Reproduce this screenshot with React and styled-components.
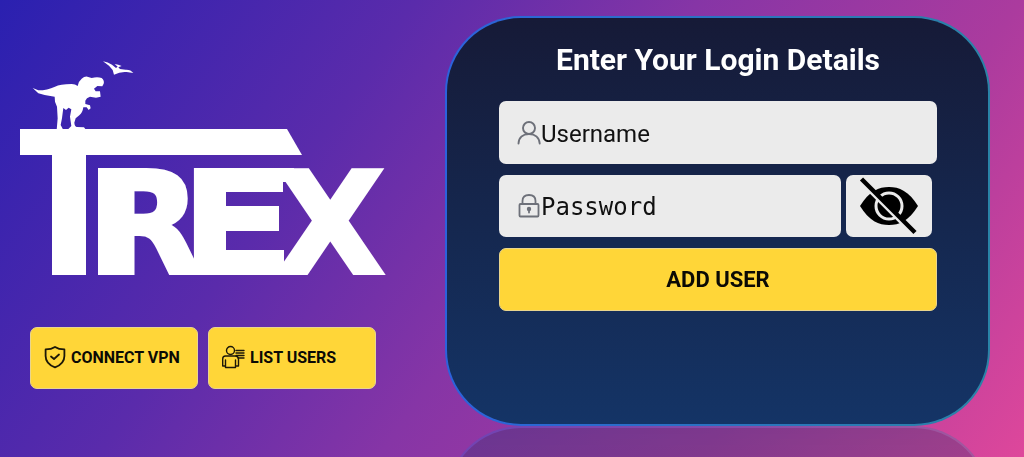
import React from "react";
import styled, { createGlobalStyle } from "styled-components";

const GlobalStyle = createGlobalStyle`
  *, *::before, *::after { box-sizing: border-box; }
  body {
    margin: 0;
    font-family: Roboto, "Liberation Sans", sans-serif;
  }
`;

const Page = styled.main`
  display: grid;
  grid-template-columns: minmax(0, 366fr) minmax(0, 545fr);
  column-gap: 59px;
  align-items: start;
  height: 100vh;
  overflow: hidden;
  padding: 16px 34px 0 20px;
  background: linear-gradient(125deg, #2a20b0 0%, #5a2bab 31%, #8635a6 52%, #ab3b9e 76%, #de479b 100%);
`;

const Brand = styled.section`
  padding-top: 44px;
`;

const Logo = styled.svg`
  display: block;
  width: 100%;
  height: auto;
  fill: #fff;
  font-family: "DejaVu Sans", sans-serif;
  font-weight: 700;
  overflow: visible;
`;

const Actions = styled.nav`
  display: flex;
  gap: 10px;
  padding: 51px 10px 0;
`;

const Button = styled.button`
  display: flex;
  align-items: center;
  height: ${(p) => (p.$large ? 63 : 62)}px;
  justify-content: ${(p) => (p.$large ? "center" : "flex-start")};
  flex: 1 1 0;
  gap: 5px;
  padding: ${(p) => (p.$large ? "0" : "0 0 2px 13px")};
  border: 1px solid #e9d58e;
  border-radius: 7px;
  background: #ffd638;
  color: #0b0a05;
  font: 700 ${(p) => (p.$large ? 22 : 16)}px Roboto, "Liberation Sans", sans-serif;
  white-space: nowrap;
  cursor: pointer;
`;

const Card = styled.form`
  min-height: 410px;
  padding: 24px 51px 0 52px;
  border: 2px solid transparent;
  border-radius: 76px;
  background:
    linear-gradient(#161a37, #143466) padding-box,
    linear-gradient(90deg, #2c62dc, #2a83a6) border-box;
  -webkit-box-reflect: below 0 linear-gradient(transparent, rgba(0, 0, 0, 0.3));
`;

const Title = styled.h1`
  margin: 0 0 23px;
  color: #fff;
  font-size: 30px;
  line-height: 36px;
  text-align: center;
`;

const Fields = styled.div`
  display: flex;
  flex-direction: column;
  gap: 11px;
`;

const Row = styled.div`
  display: flex;
  gap: 5px;
  padding-right: ${(p) => p.$inset || 0}px;
`;

const Field = styled.label`
  display: flex;
  align-items: center;
  flex: 1;
  min-width: 0;
  height: ${(p) => p.$height}px;
  padding-left: 18px;
  border-radius: 7px;
  background: #ebebeb;
`;

const Input = styled.input`
  flex: 1;
  min-width: 0;
  height: 100%;
  padding: 2px 0 0;
  border: 0;
  outline: 0;
  background: transparent;
  color: #111;
  font-family: ${(p) => (p.$mono ? '"DejaVu Sans Mono", monospace' : 'Roboto, "Liberation Sans", sans-serif')};
  font-size: 24px;
  &::placeholder { color: #111; opacity: 1; }
`;

const Reveal = styled.button`
  display: grid;
  place-items: center;
  width: 86px;
  height: 62px;
  padding: 0;
  border: 0;
  border-radius: 7px;
  background: #ebebeb;
  cursor: pointer;
`;

const LineIcon = styled.svg`
  flex: none;
  fill: none;
  stroke: currentColor;
  color: ${(p) => p.$color || "#1c1808"};
  stroke-linecap: round;
  stroke-linejoin: round;
`;

function TrexLogo() {
  return (
    <Logo viewBox="20 60 366 216" role="img" aria-label="TREX">
      <g transform="translate(10 50) scale(.3333)">
        <path d="M68 114L85 121Q112 121 135 110Q150 102 185 102Q196 102 203 108Q205 94 215 86Q223 79 232 80L245 84Q262 79 275 84Q284 92 281 101L277 109L262 108L252 116L257 124L270 124L272 140L258 143L240 140Q229 143 226 152L226 162L240 166L242 175L236 180L230 172L220 172Q218 188 208 196L197 205L193 218Q194 229 200 231L222 232L228 240L172 240L184 228L180 200L184 178L176 173L168 180L160 174L156 205L152 225L160 240L140 240L143 205L141 170L135 155L134 140Q107 138 85 130Z" />
        <path d="M279 34Q294 36 306 44L318 54L323 50L314 42L325 44L335 48L325 52L330 57L347 59Q362 58 370 69L350 66Q331 64 312 74L308 60L297 47Z" />
      </g>
      <path d="M20 129H287L302 155H20Z" />
      <rect x="52" y="150" width="34" height="125" />
      <text x="22 93 183 276" y="235 273 273 273" fontSize="141" stroke="#fff" strokeWidth="4">TREX</text>
      {/* Blocks that widen the stems and join the letters */}
      <rect x="98" y="168" width="20" height="107" />
      <rect x="200" y="168" width="26" height="107" />
      <rect x="210" y="168" width="84" height="14" />
      <rect x="210" y="168" width="73" height="24" />
      <rect x="210" y="206" width="69" height="25" />
      <rect x="210" y="250" width="74" height="25" />
    </Logo>
  );
}

const ShieldIcon = () => (
  <LineIcon width="22" height="24" viewBox="0 0 22 24" strokeWidth="1.8" aria-hidden="true">
    <path d="M11 2C8 4 5 4.4 1.6 4.4V11C1.6 17 6 20.5 11 22.4C16 20.5 20.4 17 20.4 11V4.4C17 4.4 14 4 11 2Z" />
    <path d="M7 11.5L10 14L15 9.5" />
  </LineIcon>
);

const PersonListIcon = () => (
  <LineIcon width="23" height="24" viewBox="1 0 23 24" strokeWidth="1.4" aria-hidden="true">
    <circle cx="9.5" cy="5.5" r="4" />
    <path d="M4.5 21H1.7V14Q1.7 11 4.5 11H14Q17.5 11 17.5 14.5V21H14.5M4.5 15V22.5H14.5V15" />
    <path d="M15 5.5H23M15 8H23M15 10.5H23M17 13H23" />
  </LineIcon>
);

const UserIcon = () => (
  <LineIcon width="24" height="24" viewBox="0 0 24 24" strokeWidth="1.9" $color="#6d7079" aria-hidden="true">
    <circle cx="12" cy="7" r="6" />
    <path d="M1.5 22.5C1.8 16.5 6 13 12 13S22.2 16.5 22.7 22.5" />
  </LineIcon>
);

const LockIcon = () => (
  <LineIcon width="24" height="24" viewBox="0 0 24 24" strokeWidth="1.8" $color="#6d7079" aria-hidden="true">
    <rect x="2.5" y="10" width="19" height="12.5" rx="1" />
    <path d="M5.5 10V7Q5.5 1 12 1T18.5 7V10" />
    <circle cx="12" cy="15" r="1.3" fill="currentColor" />
    <path d="M12 15V18.5" />
  </LineIcon>
);

const EyeOffIcon = () => (
  <svg width="60" height="58" viewBox="0 0 60 58" aria-hidden="true">
    <path d="M1 29C10 14 20 10 30 10S50 14 59 29C50 44 40 48 30 48S10 44 1 29Z" />
    <circle cx="30" cy="29" r="13" fill="none" stroke="#ebebeb" strokeWidth="3" />
    <path d="M0 3L54 57" fill="none" stroke="#ebebeb" strokeWidth="4" />
    <path d="M2.5 2L56 55.5" fill="none" stroke="#000" strokeWidth="4.5" />
  </svg>
);

export default function App() {
  return (
    <>
      <GlobalStyle />
      <Page>
        <Brand>
          <TrexLogo />
          <Actions>
            <Button type="button"><ShieldIcon />CONNECT VPN</Button>
            <Button type="button"><PersonListIcon />LIST USERS</Button>
          </Actions>
        </Brand>
        <Card onSubmit={(e) => e.preventDefault()}>
          <Title>Enter Your Login Details</Title>
          <Fields>
            <Row>
              <Field $height={63}>
                <UserIcon />
                <Input type="text" placeholder="Username" aria-label="Username" />
              </Field>
            </Row>
            <Row $inset={5}>
              <Field $height={62}>
                <LockIcon />
                <Input $mono type="password" placeholder="Password" aria-label="Password" />
              </Field>
              <Reveal type="button" aria-label="Show password"><EyeOffIcon /></Reveal>
            </Row>
            <Row><Button $large type="submit">ADD USER</Button></Row>
          </Fields>
        </Card>
      </Page>
    </>
  );
}
